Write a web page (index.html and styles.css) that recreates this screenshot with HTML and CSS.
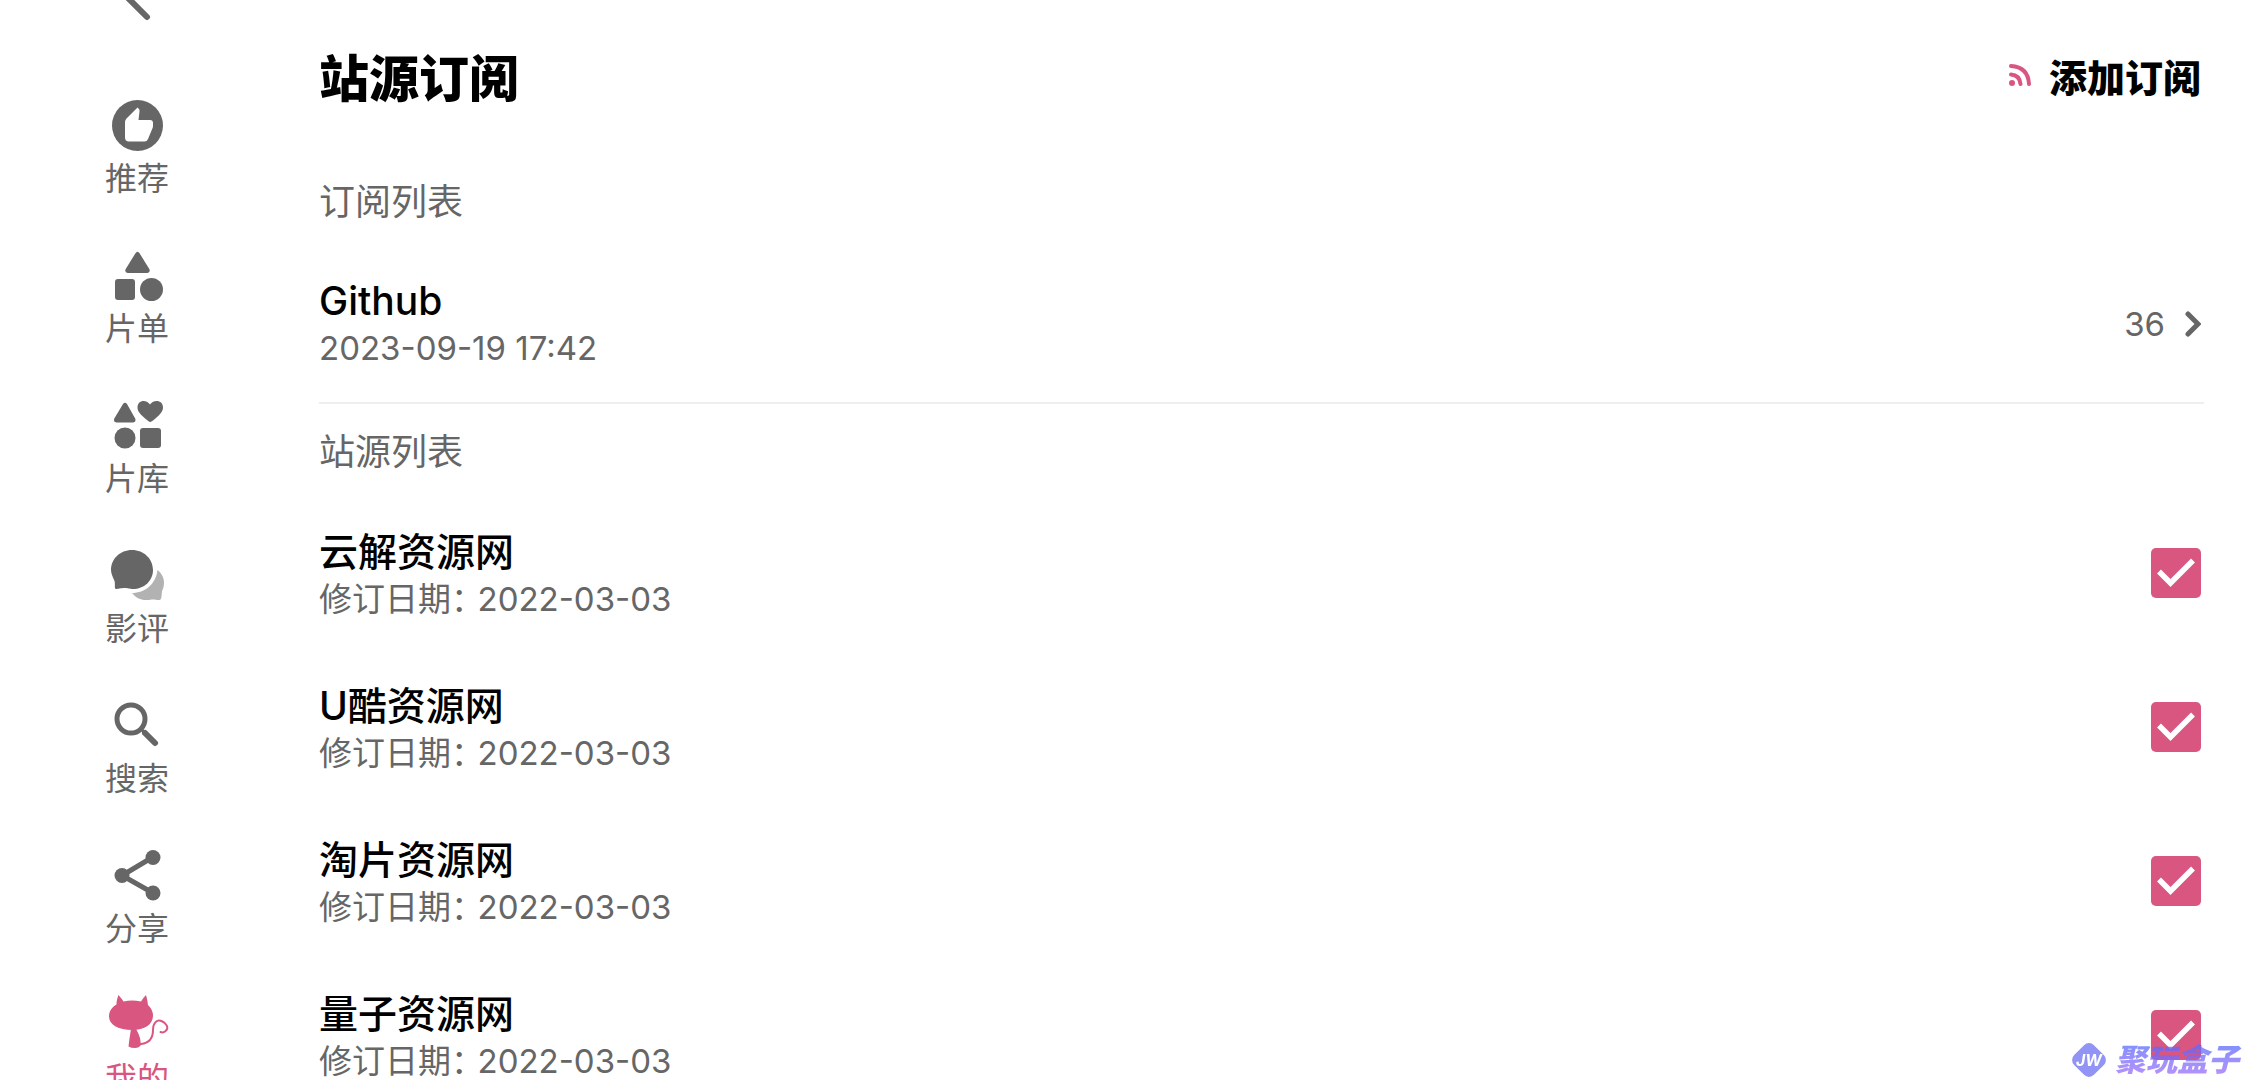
FILE: index.html
```html
<!DOCTYPE html>
<html lang="zh-CN">
<head>
  <meta charset="UTF-8">
  <meta name="viewport" content="width=device-width, initial-scale=1.0">
  <title>站源订阅</title>
  <link rel="stylesheet" href="styles.css">
</head>
<body>
  <div class="app">
    <!-- 侧边导航 -->
    <nav class="sidebar">
      <a href="#" class="back" aria-label="返回">
        <svg class="icon" viewBox="0 0 60 60"><path d="M40 57 8 25 40-7" fill="none" stroke="currentColor" stroke-width="6" stroke-linecap="round" stroke-linejoin="round"/></svg>
      </a>
      <a href="#" class="nav-item">
        <svg class="icon" viewBox="0 0 60 60">
          <circle cx="30.500" cy="30.500" r="25.500"/>
          <path class="cutout" d="M18 27q0-2 1.500-3.500L30.500 12.500l1.500 1.500q.8 1 .5 2.500L31.500 25H43q3 0 3 3v3q0 1-.4 2L41 44q-1 2.500-3.500 2.500H22q-4 0-4-4z"/>
        </svg>
        <span>推荐</span>
      </a>
      <a href="#" class="nav-item">
        <svg class="icon" viewBox="0 0 60 60">
          <path d="M28.300 8.500q2.200-3.300 4.400 0L42.300 24q1.500 3.500-2 4H20.700q-3.500-.5-2-4z"/>
          <rect x="8" y="34" width="20" height="21" rx="3"/>
          <circle cx="44.500" cy="44.500" r="11.500"/>
        </svg>
        <span>片单</span>
      </a>
      <a href="#" class="nav-item">
        <svg class="icon" viewBox="0 0 60 60">
          <path d="M16 9q2-2.500 4 0l8.200 14.500q1.200 3.500-2 4H9.300q-3.200-.5-2-4z"/>
          <path d="M43 27Q41.500 26.500 40 25C34 20 30.500 17 30.500 12.500 30.500 5 39 4 43 9.500 47 4 56 5 56 12.500 56 17 52 20.500 46 25.500 44.500 26.800 43 27 43 27z"/>
          <circle cx="18" cy="43" r="10.500"/>
          <rect x="33" y="33" width="21" height="20" rx="3"/>
        </svg>
        <span>片库</span>
      </a>
      <a href="#" class="nav-item">
        <svg class="icon" viewBox="0 0 60 60">
          <path d="M25 5C37 5 46 14 46 25S37 44 26 44c-4 0-5-1-8-1-5 0-7 1-9 1-2 0-.5-5-1.500-8C6 32 4 29 4 25 4 14 13 5 25 5z"/>
          <path class="faded" d="M50.500 25c5 4 7.500 10 6.200 16-.5 3-1.700 4-1.900 7-.2 4-.6 7-2.300 7-3 .2-5-1-8-.5-9 2-15-1-19.500-6.500C38 48 49 39 50.500 25z"/>
        </svg>
        <span>影评</span>
      </a>
      <a href="#" class="nav-item">
        <svg class="icon" viewBox="0 0 60 60">
          <circle cx="24" cy="24" r="14" fill="none" stroke="currentColor" stroke-width="5"/>
          <path d="M34 34 48 48" stroke="currentColor" stroke-width="3"/>
          <path d="M38 38 48 48" stroke="currentColor" stroke-width="6" stroke-linecap="round"/>
        </svg>
        <span>搜索</span>
      </a>
      <a href="#" class="nav-item">
        <svg class="icon" viewBox="0 0 60 60">
          <path d="M46 12 15 30.500 46 48" fill="none" stroke="currentColor" stroke-width="5"/>
          <circle cx="46" cy="12.500" r="7.500"/>
          <circle cx="15" cy="30.500" r="7.500"/>
          <circle cx="46" cy="48" r="7.500"/>
        </svg>
        <span>分享</span>
      </a>
      <a href="#" class="nav-item active">
        <svg class="icon" viewBox="0 0 60 60">
          <path d="M11.500 0Q15 4 16.500 6.500 25 4.500 34 6.500 36 3 39 0 40.500 5 41 10 46 15 46 20.500C46 29.500 38 35 25 35S2 30 2 21.500C2 16 5 12 9.500 9.500 9.500 5 11.500 0 11.500 0z"/>
          <path d="M24 34h5Q31 37 33 43l1 7q-2 3-6 3-4 0-6.500-1.500 1-9 2.500-17.500z"/>
          <path d="M34 49C43 48 46 43 46 35 46 28 50 24 54.500 26 59 28 63 33 58 36.500Q56 38 53.500 37" fill="none" stroke="currentColor" stroke-width="2" stroke-linecap="round"/>
        </svg>
        <span>我的</span>
      </a>
    </nav>

    <main class="content">
      <header class="page-header">
        <h1>站源订阅</h1>
        <button type="button" class="add-btn">
          <svg class="rss" viewBox="0 0 22 22"><circle cx="3" cy="19" r="3"/><path d="M2 10.500Q10.500 11 11.500 20M2 2Q19 3 20 20" fill="none" stroke="currentColor" stroke-width="4" stroke-linecap="round"/></svg>
          添加订阅
        </button>
      </header>

      <!-- 订阅列表 -->
      <h2>订阅列表</h2>
      <a href="#" class="row subscription">
        <span class="info">
          <span class="name">Github</span>
          <span class="date">2023-09-19 17:42</span>
        </span>
        <span class="count">36</span>
        <svg class="arrow" viewBox="0 0 16 26"><path d="M3 3 13 13 3 23" fill="none" stroke="currentColor" stroke-width="5" stroke-linecap="round"/></svg>
      </a>

      <!-- 站源列表 -->
      <h2>站源列表</h2>
      <label class="row">
        <span class="info">
          <span class="name">云解资源网</span>
          <span class="date">修订日期：<time>2022-03-03</time></span>
        </span>
        <input type="checkbox" checked>
      </label>
      <label class="row">
        <span class="info">
          <span class="name">U酷资源网</span>
          <span class="date">修订日期：<time>2022-03-03</time></span>
        </span>
        <input type="checkbox" checked>
      </label>
      <label class="row">
        <span class="info">
          <span class="name">淘片资源网</span>
          <span class="date">修订日期：<time>2022-03-03</time></span>
        </span>
        <input type="checkbox" checked>
      </label>
      <label class="row">
        <span class="info">
          <span class="name">量子资源网</span>
          <span class="date">修订日期：<time>2022-03-03</time></span>
        </span>
        <input type="checkbox" checked>
      </label>
    </main>
  </div>

  <!-- 水印 -->
  <div class="watermark">
    <span class="badge"><b>JW</b></span>
    <span class="brand">聚玩盒子</span>
  </div>
</body>
</html>
```
FILE: styles.css
```css
* {
  box-sizing: border-box;
}
body {
  margin: 0;
  font-family: Inter, "Noto Sans CJK SC", sans-serif;
  background-color: #fff;
  color: #000;
}
a {
  color: inherit;
  text-decoration: none;
}
.app {
  display: flex;
  height: 100vh;
  overflow: hidden;
}

/* Sidebar */
.sidebar {
  display: flex;
  flex-direction: column;
  align-items: center;
  gap: 42px;
  flex: 0 0 274px;
  margin-top: -40px;
  color: #666;
}
.back {
  height: 60px;
  margin-bottom: 33px;
}
.icon {
  display: block;
  width: 60px;
  height: 60px;
  fill: currentColor;
  overflow: visible;
}
.cutout {
  fill: #fff;
}
.faded {
  opacity: 0.5;
}
.nav-item {
  display: flex;
  flex-direction: column;
  align-items: center;
  font-size: 32px;
  line-height: 48px;
}
.nav-item.active {
  color: #d95681;
}

/* Content */
.content {
  flex: 1;
  padding: 0 44px 0 45px;
}
.page-header {
  display: flex;
  align-items: center;
  justify-content: space-between;
  height: 154px;
  padding: 0 3px 4px 0;
}
h1 {
  margin: 0;
  font-size: 50px;
  font-weight: 900;
}
.add-btn {
  display: flex;
  align-items: center;
  gap: 18px;
  padding: 0;
  border: none;
  background: none;
  color: #000;
  font-family: inherit;
  font-size: 38px;
  font-weight: 900;
  cursor: pointer;
}
.rss {
  width: 22px;
  height: 22px;
  color: #d95681;
  fill: currentColor;
}
h2 {
  margin: 0;
  color: #666;
  font-size: 36px;
  font-weight: 400;
  line-height: 96px;
}
.row {
  display: flex;
  align-items: center;
  height: 154px;
  padding: 0 3px 4px 0;
}
.subscription {
  border-bottom: 2px solid #eee;
}
.info {
  flex: 1;
}
.name,
.date {
  display: block;
}
.name {
  font-size: 39px;
  font-weight: 500;
  line-height: 48px;
}
.date,
.count {
  color: #666;
  font-size: 33px;
  line-height: 46px;
}
/* half-width colon before the date */
.date {
  font-feature-settings: "halt";
}
.date time {
  margin-left: 10px;
}
.arrow {
  width: 16px;
  height: 26px;
  margin-left: 20px;
  color: #666;
}
input[type="checkbox"] {
  appearance: none;
  width: 50px;
  height: 50px;
  margin: 0 0 4px;
  border-radius: 5px;
  border: 2px solid #999;
}
input[type="checkbox"]:checked {
  border: none;
  background: #d95681 url("data:image/svg+xml,%3Csvg xmlns='http://www.w3.org/2000/svg' viewBox='0 0 50 50'%3E%3Cpath d='M8 23.500 19.500 35 42 12.500' fill='none' stroke='white' stroke-width='5.500'/%3E%3C/svg%3E");
}

/* Watermark */
.watermark {
  position: fixed;
  right: 6px;
  bottom: 0;
  display: flex;
  align-items: center;
  gap: 12px;
  height: 40px;
  opacity: 0.75;
}
.badge {
  display: grid;
  place-items: center;
  width: 28px;
  height: 28px;
  border-radius: 7px;
  background: #6c70f0;
  transform: rotate(45deg);
}
.badge b {
  color: #fff;
  font-size: 16px;
  font-style: italic;
  transform: rotate(-45deg);
}
.brand {
  padding-right: 3px;
  font-size: 31px;
  font-weight: 900;
  font-style: italic;
  line-height: 40px;
  background: linear-gradient(#4f6bff, #a86cf5);
  background-clip: text;
  -webkit-background-clip: text;
  color: transparent;
}
```
